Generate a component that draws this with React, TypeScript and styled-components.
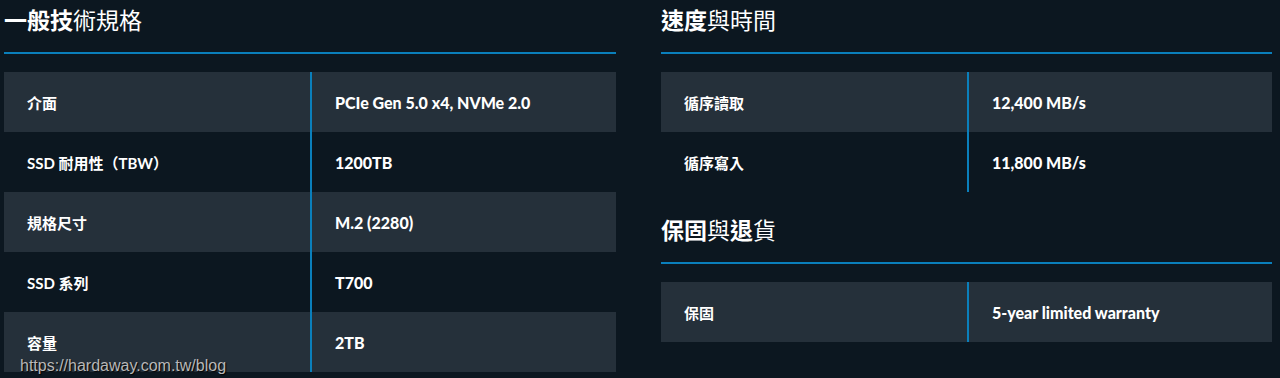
import React from 'react';
import styled, { createGlobalStyle } from 'styled-components';

const GlobalStyle = createGlobalStyle`
	html, body {
		margin: 0;
		padding: 0;
		background: #0c1720;
	}
	body {
		font-family: Lato, "Noto Sans CJK TC", sans-serif;
		color: #ffffff;
	}
`;

const Page = styled.div`
	position: relative;
	width: 1280px;
	height: 378px;
	overflow: hidden;
	background: #0c1720;
	display: grid;
	grid-template-columns: 612px 611px;
	column-gap: 45px;
	padding-left: 4px;
	box-sizing: border-box;
	align-items: start;
`;

const Column = styled.div`
	display: flex;
	flex-direction: column;
`;

const Heading = styled.h2<{ $first?: boolean }>`
	margin: ${({ $first }) => ($first ? '0' : '18px')} 0 18px;
	padding-bottom: 14px;
	border-bottom: 2px solid #0a7fbb;
	font-family: "Noto Sans CJK TC", sans-serif;
	font-size: 23px;
	line-height: 38px;
	font-weight: 700;
	color: #ffffff;

	.thin {
		font-weight: 400;
	}
`;

const Table = styled.div`
	display: flex;
	flex-direction: column;
`;

const Row = styled.div<{ $shade: boolean }>`
	display: grid;
	grid-template-columns: 308px 1fr;
	height: 60px;
	background: ${({ $shade }) => ($shade ? '#25303a' : 'transparent')};
`;

const Label = styled.div`
	display: flex;
	align-items: center;
	padding-left: 23px;
	border-right: 2px solid #0a7fbb;
	font-family: Lato, "Noto Sans CJK TC", sans-serif;
	font-size: 15px;
	font-weight: 700;
`;

const Value = styled.div`
	display: flex;
	align-items: center;
	padding-left: 23px;
	font-family: Lato, "Noto Sans CJK TC", sans-serif;
	font-size: 16px;
	font-weight: 900;
`;

const Watermark = styled.div`
	position: absolute;
	left: 20px;
	top: 357px;
	font-family: "Liberation Sans", Arial, sans-serif;
	font-size: 16px;
	color: #b8b8b8;
	text-shadow: 1px 1px 1px #000;
`;

type Spec = { label: string; value: string };

const general: Spec[] = [
	{ label: '介面', value: 'PCIe Gen 5.0 x4, NVMe 2.0' },
	{ label: 'SSD 耐用性（TBW）', value: '1200TB' },
	{ label: '規格尺寸', value: 'M.2 (2280)' },
	{ label: 'SSD 系列', value: 'T700' },
	{ label: '容量', value: '2TB' },
];

const speed: Spec[] = [
	{ label: '循序讀取', value: '12,400 MB/s' },
	{ label: '循序寫入', value: '11,800 MB/s' },
];

const warranty: Spec[] = [{ label: '保固', value: '5-year limited warranty' }];

const SpecTable = ({ rows }: { rows: Spec[] }) => (
	<Table>
		{rows.map((r, i) => (
			<Row key={r.label} $shade={i % 2 === 0}>
				<Label>{r.label}</Label>
				<Value>{r.value}</Value>
			</Row>
		))}
	</Table>
);

export default function App() {
	return (
		<>
			<GlobalStyle />
			<Page>
				<Column>
					<Heading $first>
						一般技<span className='thin'>術規格</span>
					</Heading>
					<SpecTable rows={general} />
				</Column>
				<Column>
					<Heading $first>
						速度<span className='thin'>與時間</span>
					</Heading>
					<SpecTable rows={speed} />
					<Heading>
						保固<span className='thin'>與</span>退<span className='thin'>貨</span>
					</Heading>
					<SpecTable rows={warranty} />
				</Column>
				<Watermark>https://hardaway.com.tw/blog</Watermark>
			</Page>
		</>
	);
}
